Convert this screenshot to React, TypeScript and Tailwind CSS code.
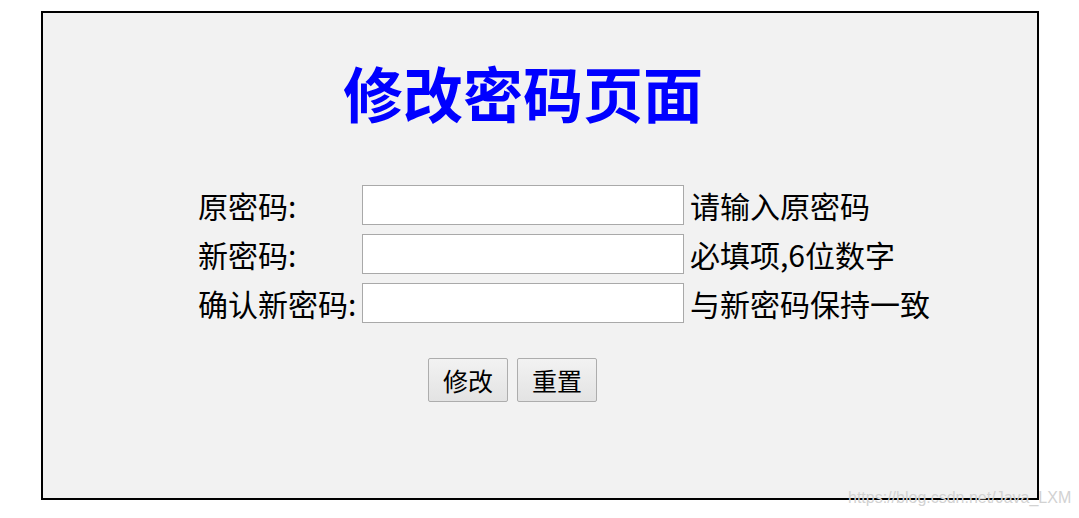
export default function App() {
  const rows = [
    { label: "原密码:", hint: "请输入原密码" },
    { label: "新密码:", hint: "必填项,6位数字" },
    { label: "确认新密码:", hint: "与新密码保持一致" },
  ];

  return (
    <div
      className="relative w-[1079px] h-[518px] bg-white pt-[11px] pl-[41px]"
      style={{ fontFamily: '"Noto Sans CJK SC", "Noto Sans", sans-serif' }}
    >
      {/* Main panel */}
      <div className="w-[998px] h-[489px] border-2 border-black bg-[#f2f2f2] pt-[49px]">
        <h1 className="text-center pr-[34px] text-[60px] leading-[60px] font-bold text-[#0000ff]">
          修改密码页面
        </h1>

        {/* Form rows */}
        <div className="ml-[155px] mt-[63px] grid grid-cols-[164px_322px_auto] gap-y-[9px]">
          {rows.map((r) => (
            <div key={r.label} className="contents">
              <label className="h-[40px] flex items-center text-[30px] leading-none text-black">
                {r.label}
              </label>
              <input
                type="password"
                className="h-[40px] w-[322px] border border-[#a9a9a9] bg-white outline-none"
              />
              <span className="h-[40px] flex items-center pl-[6px] text-[30px] leading-none text-black whitespace-nowrap">
                {r.hint}
              </span>
            </div>
          ))}
        </div>

        {/* Buttons */}
        <div className="ml-[385px] mt-[35px] flex gap-[9px]">
          <button className="w-[80px] h-[44px] rounded-[2px] border border-[#adadad] bg-gradient-to-b from-[#f2f2f2] to-[#e3e3e3] text-[25px] leading-none text-black">
            修改
          </button>
          <button className="w-[80px] h-[44px] rounded-[2px] border border-[#adadad] bg-gradient-to-b from-[#f2f2f2] to-[#e3e3e3] text-[25px] leading-none text-black">
            重置
          </button>
        </div>
      </div>

      {/* Watermark */}
      <span
        className="absolute left-[848px] top-[489px] text-[16px] leading-[18px] text-[#d2d2d2] whitespace-nowrap"
        style={{ fontFamily: '"Liberation Sans", Arial, sans-serif' }}
      >
        https://blog.csdn.net/Java_LXM
      </span>
    </div>
  );
}
